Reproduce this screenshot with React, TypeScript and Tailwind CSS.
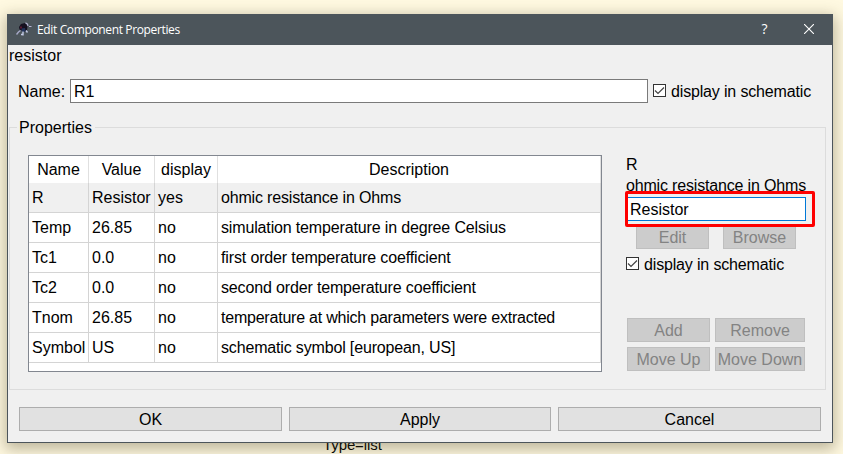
import { clsx } from "clsx";

const columns = ["Name", "Value", "display", "Description"];

const rows = [
  { cells: ["R", "Resistor", "yes", "ohmic resistance in Ohms"], tracking: "tracking-[-0.17px]" },
  { cells: ["Temp", "26.85", "no", "simulation temperature in degree Celsius"], tracking: "tracking-[-0.15px]" },
  { cells: ["Tc1", "0.0", "no", "first order temperature coefficient"], tracking: "tracking-[-0.14px]" },
  { cells: ["Tc2", "0.0", "no", "second order temperature coefficient"], tracking: "tracking-[-0.15px]" },
  { cells: ["Tnom", "26.85", "no", "temperature at which parameters were extracted"], tracking: "tracking-[-0.22px]" },
  { cells: ["Symbol", "US", "no", "schematic symbol [european, US]"], tracking: "tracking-[-0.16px]" },
];

function Check({ label }: { label: string }) {
  return (
    <label className="flex h-[21px] items-center gap-[5px]">
      <span className="flex size-[13px] shrink-0 border border-[#333] bg-white">
        <svg viewBox="0 0 11 11" className="size-[11px]" fill="none" stroke="#444" strokeWidth="1.2">
          <path d="M1 5.500 4 8.500 10 2.500" />
        </svg>
      </span>
      <span className="pt-[2px] tracking-[-0.16px] whitespace-nowrap">{label}</span>
    </label>
  );
}

function Button({ label, className, disabled = false }: { label: string; className: string; disabled?: boolean }) {
  return (
    <button
      disabled={disabled}
      className={clsx(
        "flex h-6 items-center justify-center border pt-[2px] leading-none",
        disabled ? "border-[#bfbfbf] bg-[#cccccc] text-[#838383]" : "border-[#adadad] bg-[#e1e1e1]",
        className,
      )}
    >
      {label}
    </button>
  );
}

function AppIcon() {
  return (
    <svg viewBox="0 0 16 16" className="size-4" fill="none">
      <path d="M.5 12.500 2.500 10 4.500 8.500" stroke="#a7a9c8" strokeWidth="1.4" />
      <path d="M3 5 5 2 9 1 11.500 4 11 8.500 8 9.500 3.500 7.500Z" fill="#15101f" />
      <path d="M9.500 .8 11.500 2 12 4M13 4.500h2.500" stroke="#b9b5d6" strokeWidth="1.1" />
      <path d="M5.500 6.500 9 6 9.500 9.500 6 10Z" fill="#23345c" />
      <path d="M4 4.500h2v2H4Z" fill="#5a1730" />
      <path d="M7 9.500v4M5 12.500h2.500M10 8.500l1.500 2" stroke="#c3cbe6" strokeWidth="1.400" />
    </svg>
  );
}

export default function App() {
  return (
    <div className="relative h-[454px] w-[843px] overflow-hidden bg-[#fff9e1] pt-[14px] pl-[7px] font-['Liberation_Sans',Arial,sans-serif] text-[16px] leading-[20px] text-black">
      <span className="absolute top-[435px] left-[323px] text-[15px] tracking-[-0.1px]">Type=list</span>

      <div className="relative flex h-[429px] w-[826px] flex-col border border-[#4c555b] bg-[#f0f0f0] shadow-[0_4px_14px_2px_rgba(70,60,30,0.36)]">
        <header className="-mx-px -mt-px flex h-[31px] shrink-0 items-center bg-[#4c555b] pl-[9px] font-['Open_Sans',sans-serif] text-[12px] text-white">
          <AppIcon />
          <span className="ml-[5px] tracking-[-0.36px]">Edit Component Properties</span>
          <span className="ml-auto w-[45px] pb-px text-center text-[14px]">?</span>
          <svg viewBox="0 0 10 10" className="mr-[19px] mb-px ml-[17px] size-[10px]" stroke="#fff" strokeWidth="1.1">
            <path d="M0 0 10 10M10 0 0 10" />
          </svg>
        </header>

        <p className="h-[21px] pl-px leading-[21px]">resistor</p>

        <div className="mt-[13px] flex h-6 items-center pl-[10px]">
          <span className="w-[52px] pt-[2px]">Name:</span>
          <div className="mr-[5px] flex h-6 w-[578px] items-center border border-[#7a7a7a] bg-white pt-[2px] pl-[3px]">R1</div>
          <div className="mt-px self-start">
            <Check label="display in schematic" />
          </div>
        </div>

        <fieldset className="mt-[14px] ml-px h-[273px] w-[817px] border border-[#dcdcdc]">
          <legend className="ml-[7px] h-[21px] w-[78px] pl-[2px] leading-[21px]">Properties</legend>

          <div className="-mt-px flex pt-[18px] pl-[18px]">
            <div className="h-[217px] w-[574px] shrink-0 border border-[#828790] bg-white">
              <div className="grid grid-cols-[60px_66px_63px_383px]">
                {columns.map((name) => (
                  <div key={name} className="flex h-[27px] items-center justify-center border-r border-[#e0e0e0] pt-px">
                    {name}
                  </div>
                ))}
              </div>
              {rows.map(({ cells, tracking }, index) => (
                <div
                  key={cells[0]}
                  className={clsx("grid h-[30px] grid-cols-[60px_66px_63px_383px]", index === 0 && "bg-[#f0f0f0]")}
                >
                  {cells.map((cell, column) => (
                    <div
                      key={column}
                      className={clsx(
                        "flex items-center border-r border-b border-[#d4d4d4] pl-[3px] whitespace-nowrap",
                        column === 3 && tracking,
                      )}
                    >
                      {cell}
                    </div>
                  ))}
                </div>
              ))}
            </div>

            <div className="ml-[24px] flex w-[180px] flex-col">
              <p className="h-[20px]">R</p>
              <p className="h-[22px] pt-px tracking-[-0.17px] whitespace-nowrap">ohmic resistance in Ohms</p>
              <div className="relative flex h-6 items-center border border-[#0078d7] bg-white pt-[2px] pl-[3px]">
                Resistor
                <div className="absolute -top-[7px] -left-[2px] h-[36px] w-[190px] rounded-[2px] border-[3px] border-[#fe0000]" />
              </div>
              <div className="mt-1 flex gap-[14px] pl-[10px]">
                <Button label="Edit" className="w-[73px]" disabled />
                <Button label="Browse" className="w-[73px]" disabled />
              </div>
              <div className="mt-1">
                <Check label="display in schematic" />
              </div>
              <div className="mt-[44px] ml-px grid grid-cols-[83px_90px] gap-[5px] whitespace-nowrap">
                <Button label="Add" className="w-[83px]" disabled />
                <Button label="Remove" className="w-[90px]" disabled />
                <Button label="Move Up" className="w-[83px]" disabled />
                <Button label="Move Down" className="w-[90px]" disabled />
              </div>
            </div>
          </div>
        </fieldset>

        <div className="mt-[17px] flex gap-[7px] pl-[11px]">
          <Button label="OK" className="w-[263px]" />
          <Button label="Apply" className="w-[262px]" />
          <Button label="Cancel" className="w-[263px]" />
        </div>
      </div>
    </div>
  );
}
